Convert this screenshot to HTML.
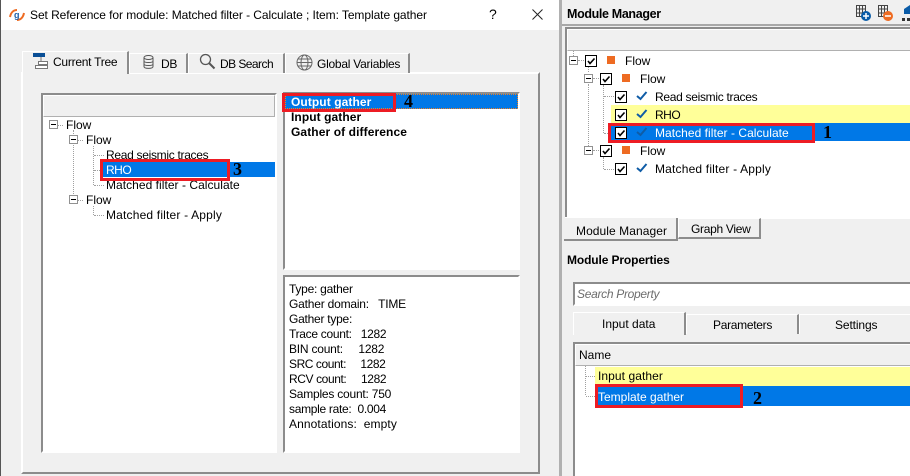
<!DOCTYPE html>
<html><head><meta charset="utf-8">
<style>
html,body{margin:0;padding:0;width:910px;height:476px;overflow:hidden;background:#f0f0f0}
body{position:relative;font-family:"Liberation Sans",sans-serif;font-size:12px;color:#000}
.a{position:absolute;box-sizing:border-box}
.t{position:absolute;white-space:pre;line-height:15px;height:15px}
.b{font-weight:bold}
.w{color:#fff}
.sunken{border:2px solid #fff;border-left-color:#8c8c8c;border-top-color:#8c8c8c;background:#fff}
.blue{background:#0078e7}
.red{position:absolute;box-sizing:border-box;border:3px solid #ed1c24}
.num{position:absolute;font-family:"Liberation Serif",serif;font-weight:bold;font-size:18px;line-height:18px}
.tab{position:absolute;box-sizing:border-box;background:#f0f0f0;border:1px solid #fff;border-bottom:none;border-right:2px solid #8c8c8c}
.hdr{background:#f0f0f0;border:1px solid #fff;border-right:1px solid #b0b0b0;border-bottom:1px solid #b0b0b0}
.d{position:absolute;border-color:#a0a0a0;border-style:dotted;border-width:0}
.pm{position:absolute;width:9px;height:9px;box-sizing:border-box;border:1px solid #919191;background:#fff}
.pm:after{content:"";position:absolute;left:1px;top:3px;width:5px;height:1px;background:#000}
.cb{position:absolute;width:12px;height:12px;box-sizing:border-box;border:1px solid #000;background:#fff}
.cb svg,.ck svg{position:absolute;left:0;top:0}
.sq{position:absolute;width:8px;height:8px;background:#ee6b22}
svg{display:block}
</style></head><body>

<!-- dialog -->
<div class="a" style="left:0;top:0;width:1px;height:476px;background:#555"></div>
<div class="a" style="left:1px;top:0;width:558px;height:30px;background:#fff"></div>
<svg class="a" style="left:9px;top:9px" width="16" height="12" viewBox="0 0 16 12"><path d="M1 8C2 3 5 1 8 1" stroke="#ee6b22" stroke-width="2" fill="none"/><path d="M15 4C14 9 11 11 8 11" stroke="#ee6b22" stroke-width="2" fill="none"/><text x="5" y="9" font-family="Liberation Sans" font-size="9" font-weight="bold" fill="#1e5fa8">g</text></svg>
<div class="t" style="left:30px;top:8px;letter-spacing:-.066px">Set Reference for module: Matched filter - Calculate ; Item: Template gather</div>
<div class="t" style="left:489px;top:7px;font-size:14px">?</div>
<svg class="a" style="left:532px;top:9px" width="11" height="11"><path d="M0.5 0.5L10.5 10.5M10.5 0.5L0.5 10.5" stroke="#222" stroke-width="1"/></svg>
<div class="a" style="left:559px;top:0;width:3px;height:476px;background:#b0b0b0"></div>

<!-- pane -->
<div class="a" style="left:21px;top:72px;width:519px;height:402px;border:2px solid #fff;border-right-color:#8c8c8c;border-bottom-color:#8c8c8c;background:#f0f0f0"></div>

<!-- tabs -->
<div class="tab" style="left:22px;top:51px;width:107px;height:23px;border-bottom:none"></div>
<svg class="a" style="left:33px;top:53px" width="18" height="17"><rect x="0" y="0" width="12" height="4" fill="#0a4f96"/><path d="M8 4V8M5.5 8.5H14.5V11.5H5.5ZM2.5 12.5H14.5V15.5H2.5Z" stroke="#777" fill="#fff"/></svg>
<div class="t" style="left:53px;top:55px;letter-spacing:-.25px">Current Tree</div>
<div class="tab" style="left:129px;top:53px;width:59px;height:20px"></div>
<svg class="a" style="left:143px;top:55px" width="11" height="14"><ellipse cx="5.5" cy="2.5" rx="4.5" ry="2" fill="none" stroke="#555"/><path d="M1 2.5V11.5C1 14 10 14 10 11.5V2.5M1 6C1 8 10 8 10 6M1 9C1 11 10 11 10 9" fill="none" stroke="#555"/></svg>
<div class="t" style="left:161px;top:57px;letter-spacing:-.3px">DB</div>
<div class="tab" style="left:188px;top:53px;width:97px;height:20px"></div>
<svg class="a" style="left:199px;top:53px" width="17" height="17"><circle cx="6.5" cy="6.5" r="5" fill="none" stroke="#555" stroke-width="1.3"/><path d="M10 10L15.5 15.5" stroke="#555" stroke-width="2"/></svg>
<div class="t" style="left:220px;top:57px;letter-spacing:-.55px">DB Search</div>
<div class="tab" style="left:285px;top:53px;width:125px;height:20px"></div>
<svg class="a" style="left:296px;top:54px" width="17" height="17"><circle cx="8.5" cy="8.5" r="7.5" fill="none" stroke="#666"/><ellipse cx="8.5" cy="8.5" rx="3.5" ry="7.5" fill="none" stroke="#666"/><path d="M1 8.5H16M2 5H15M2 12H15" stroke="#666" fill="none"/></svg>
<div class="t" style="left:317px;top:57px;letter-spacing:-.25px">Global Variables</div>

<!-- left tree -->
<div class="a sunken" style="left:41px;top:93px;width:236px;height:360px"></div>
<div class="a hdr" style="left:43px;top:95px;width:232px;height:22px"></div>
<div class="pm" style="left:49px;top:120px"></div>
<div class="d" style="left:58px;top:125px;width:5px;border-top-width:1px"></div>
<div class="t" style="left:66px;top:118px">Flow</div>
<div class="d" style="left:73px;top:130px;height:70px;border-left-width:1px"></div>
<div class="pm" style="left:69px;top:135px"></div>
<div class="d" style="left:78px;top:140px;width:5px;border-top-width:1px"></div>
<div class="t" style="left:86px;top:133px">Flow</div>
<div class="d" style="left:93px;top:146px;height:39px;border-left-width:1px"></div>
<div class="d" style="left:94px;top:155px;width:10px;border-top-width:1px"></div>
<div class="d" style="left:94px;top:170px;width:10px;border-top-width:1px"></div>
<div class="d" style="left:94px;top:185px;width:10px;border-top-width:1px"></div>
<div class="t" style="left:106px;top:148px;letter-spacing:-.3px">Read seismic traces</div>
<div class="a blue" style="left:102px;top:162px;width:173px;height:15px"></div>
<div class="t w" style="left:106px;top:163px;letter-spacing:-.5px">RHO</div>
<div class="t" style="left:106px;top:178px;letter-spacing:.04px">Matched filter - Calculate</div>
<div class="pm" style="left:69px;top:195px"></div>
<div class="d" style="left:78px;top:200px;width:5px;border-top-width:1px"></div>
<div class="t" style="left:86px;top:193px">Flow</div>
<div class="d" style="left:93px;top:206px;height:9px;border-left-width:1px"></div>
<div class="d" style="left:94px;top:215px;width:10px;border-top-width:1px"></div>
<div class="t" style="left:106px;top:208px;letter-spacing:.18px">Matched filter - Apply</div>
<div class="red" style="left:100px;top:159px;width:130px;height:22px"></div>
<div class="num" style="left:233px;top:160px">3</div>

<!-- output list -->
<div class="a sunken" style="left:283px;top:92px;width:237px;height:178px"></div>
<div class="a blue" style="left:285px;top:94px;width:233px;height:15px;outline:1px dotted #f08020;outline-offset:-1px"></div>
<div class="t b w" style="left:291px;top:95px;letter-spacing:.08px">Output gather</div>
<div class="t b" style="left:291px;top:110px;letter-spacing:.08px">Input gather</div>
<div class="t b" style="left:291px;top:125px;letter-spacing:.1px">Gather of difference</div>
<div class="red" style="left:282px;top:93px;width:114px;height:19px"></div>
<div class="num" style="left:404px;top:92px">4</div>

<!-- info -->
<div class="a sunken" style="left:283px;top:275px;width:237px;height:178px"></div>
<div class="t" style="left:289px;top:282px;letter-spacing:-.25px">Type: gather</div>
<div class="t" style="left:289px;top:297px;letter-spacing:-.2px">Gather domain:   TIME</div>
<div class="t" style="left:289px;top:312px;letter-spacing:-.25px">Gather type:</div>
<div class="t" style="left:289px;top:327px;letter-spacing:-.3px">Trace count:   1282</div>
<div class="t" style="left:289px;top:342px;letter-spacing:-.22px">BIN count:     1282</div>
<div class="t" style="left:289px;top:357px;letter-spacing:-.44px">SRC count:     1282</div>
<div class="t" style="left:289px;top:372px;letter-spacing:-.4px">RCV count:     1282</div>
<div class="t" style="left:289px;top:387px;letter-spacing:-.22px">Samples count: 750</div>
<div class="t" style="left:289px;top:402px;letter-spacing:-.3px">sample rate:  0.004</div>
<div class="t" style="left:289px;top:417px;letter-spacing:.1px">Annotations:  empty</div>

<!-- right panel -->
<div class="t b" style="left:567px;top:7px;font-size:12.5px;letter-spacing:-.35px">Module Manager</div>
<svg class="a" style="left:855px;top:4px" width="55" height="18">
<g fill="none" stroke="#444"><rect x="1.500" y="1.500" width="9" height="11"/><path d="M4.500 1.500V12.500M7.500 1.500V12.500M1.500 5H10.500M1.500 9H10.500"/></g>
<circle cx="11" cy="12" r="5" fill="#0a5ca8"/><path d="M8 12H14M11 9V15" stroke="#fff" stroke-width="1.500"/>
<g fill="none" stroke="#444"><rect x="23.500" y="1.500" width="9" height="11"/><path d="M26.500 1.500V12.500M29.500 1.500V12.500M23.500 5H32.500M23.500 9H32.500"/></g>
<circle cx="33" cy="12" r="5" fill="#ee6b22"/><path d="M30 12H36" stroke="#fff" stroke-width="1.500"/>
<path d="M49 5L55 1V10H49Z" fill="#0a5ca8"/><rect x="47" y="14" width="3" height="3" fill="#333"/><rect x="52" y="14" width="3" height="3" fill="#333"/>
</svg>
<div class="a" style="left:562px;top:24px;width:348px;height:2px;background:#a8a8a8"></div>
<div class="a sunken" style="left:565px;top:27px;width:350px;height:190px;border-right:none;border-bottom:none"></div>
<div class="a hdr" style="left:567px;top:29px;width:345px;height:22px;border-right:none"></div>

<div class="d" style="left:573px;top:51px;height:5px;border-left-width:1px"></div>
<div class="pm" style="left:569px;top:56px"></div>
<div class="d" style="left:578px;top:60px;width:6px;border-top-width:1px"></div>
<div class="cb" style="left:585px;top:55px"><svg width="10" height="10"><path d="M2 5L4 7.500L8.500 2.500" fill="none" stroke="#000" stroke-width="1.600"/></svg></div>
<div class="sq" style="left:607px;top:56px"></div>
<div class="t" style="left:625px;top:54px">Flow</div>

<div class="d" style="left:588px;top:67px;height:5px;border-left-width:1px"></div>
<div class="pm" style="left:584px;top:74px"></div>
<div class="d" style="left:593px;top:78px;width:6px;border-top-width:1px"></div>
<div class="cb" style="left:600px;top:73px"><svg width="10" height="10"><path d="M2 5L4 7.500L8.500 2.500" fill="none" stroke="#000" stroke-width="1.600"/></svg></div>
<div class="sq" style="left:622px;top:74px"></div>
<div class="t" style="left:640px;top:72px">Flow</div>

<div class="d" style="left:588px;top:84px;height:62px;border-left-width:1px"></div>
<div class="d" style="left:603px;top:85px;height:48px;border-left-width:1px"></div>
<div class="d" style="left:604px;top:96px;width:10px;border-top-width:1px"></div>
<div class="d" style="left:604px;top:133px;width:10px;border-top-width:1px"></div>
<div class="cb" style="left:615px;top:91px"><svg width="10" height="10"><path d="M2 5L4 7.500L8.500 2.500" fill="none" stroke="#000" stroke-width="1.600"/></svg></div>
<svg class="a" style="left:636px;top:91px" width="12" height="10"><path d="M1 5L4.500 8L10.500 1" fill="none" stroke="#0f5ca6" stroke-width="2"/></svg>
<div class="t" style="left:655px;top:90px;letter-spacing:-.3px">Read seismic traces</div>

<div class="a" style="left:611px;top:105px;width:299px;height:18px;background:#ffff99"></div>
<div class="cb" style="left:615px;top:109px"><svg width="10" height="10"><path d="M2 5L4 7.500L8.500 2.500" fill="none" stroke="#000" stroke-width="1.600"/></svg></div>
<svg class="a" style="left:636px;top:109px" width="12" height="10"><path d="M1 5L4.500 8L10.500 1" fill="none" stroke="#0f5ca6" stroke-width="2"/></svg>
<div class="t" style="left:655px;top:108px;letter-spacing:-.5px">RHO</div>

<div class="a blue" style="left:611px;top:123px;width:299px;height:18px"></div>
<div class="cb" style="left:615px;top:127px"><svg width="10" height="10"><path d="M2 5L4 7.500L8.500 2.500" fill="none" stroke="#000" stroke-width="1.600"/></svg></div>
<svg class="a" style="left:636px;top:127px" width="12" height="10"><path d="M1 5L4.500 8L10.500 1" fill="none" stroke="#0f5ca6" stroke-width="2"/></svg>
<div class="t w" style="left:655px;top:126px;letter-spacing:.04px">Matched filter - Calculate</div>
<div class="red" style="left:608px;top:123px;width:207px;height:20px"></div>
<div class="num" style="left:823px;top:123px">1</div>

<div class="pm" style="left:584px;top:146px"></div>
<div class="d" style="left:593px;top:150px;width:6px;border-top-width:1px"></div>
<div class="cb" style="left:600px;top:145px"><svg width="10" height="10"><path d="M2 5L4 7.500L8.500 2.500" fill="none" stroke="#000" stroke-width="1.600"/></svg></div>
<div class="sq" style="left:622px;top:146px"></div>
<div class="t" style="left:640px;top:144px">Flow</div>

<div class="d" style="left:603px;top:157px;height:12px;border-left-width:1px"></div>
<div class="d" style="left:604px;top:169px;width:10px;border-top-width:1px"></div>
<div class="cb" style="left:615px;top:163px"><svg width="10" height="10"><path d="M2 5L4 7.500L8.500 2.500" fill="none" stroke="#000" stroke-width="1.600"/></svg></div>
<svg class="a" style="left:636px;top:163px" width="12" height="10"><path d="M1 5L4.500 8L10.500 1" fill="none" stroke="#0f5ca6" stroke-width="2"/></svg>
<div class="t" style="left:655px;top:162px;letter-spacing:.18px">Matched filter - Apply</div>

<!-- bottom tabs -->
<div class="a" style="left:565px;top:217px;width:345px;height:2px;background:#fff"></div>
<div class="a" style="left:564px;top:218px;width:114px;height:23px;background:#f0f0f0;border-right:2px solid #8c8c8c;border-bottom:2px solid #8c8c8c"></div>
<div class="t" style="left:576px;top:224px;letter-spacing:.07px">Module Manager</div>
<div class="a" style="left:678px;top:218px;width:83px;height:21px;background:#f0f0f0;border:1px solid #fff;border-right:2px solid #8c8c8c;border-bottom:2px solid #8c8c8c"></div>
<div class="t" style="left:691px;top:222px;letter-spacing:-.3px">Graph View</div>

<div class="t b" style="left:567px;top:253px;font-size:12px;letter-spacing:-.12px">Module Properties</div>

<div class="a sunken" style="left:573px;top:282px;width:337px;height:24px;border-right:none"></div>
<div class="t" style="left:577px;top:287px;color:#6d6d6d;font-style:italic;letter-spacing:-.3px">Search Property</div>

<div class="tab" style="left:573px;top:312px;width:113px;height:23px"></div>
<div class="t" style="left:602px;top:317px">Input data</div>
<div class="tab" style="left:686px;top:314px;width:113px;height:20px"></div>
<div class="t" style="left:713px;top:318px;letter-spacing:-.3px">Parameters</div>
<div class="tab" style="left:799px;top:314px;width:111px;height:20px;border-right:none"></div>
<div class="t" style="left:835px;top:318px;letter-spacing:-.12px">Settings</div>

<div class="a" style="left:573px;top:342px;width:337px;height:134px;background:#fff;border-left:2px solid #8c8c8c;border-top:2px solid #8c8c8c"></div>
<div class="a hdr" style="left:575px;top:344px;width:335px;height:22px;border-right:none"></div>
<div class="t" style="left:579px;top:348px">Name</div>

<div class="d" style="left:585px;top:366px;height:29px;border-left-width:1px"></div>
<div class="d" style="left:586px;top:376px;width:9px;border-top-width:1px"></div>
<div class="d" style="left:586px;top:396px;width:9px;border-top-width:1px"></div>
<div class="a" style="left:595px;top:367px;width:315px;height:19px;background:#ffff99"></div>
<div class="t" style="left:598px;top:369px;letter-spacing:.08px">Input gather</div>
<div class="a blue" style="left:595px;top:386px;width:315px;height:20px"></div>
<div class="t w" style="left:598px;top:390px">Template gather</div>
<div class="red" style="left:595px;top:384px;width:148px;height:24px"></div>
<div class="num" style="left:753px;top:389px">2</div>

</body></html>
